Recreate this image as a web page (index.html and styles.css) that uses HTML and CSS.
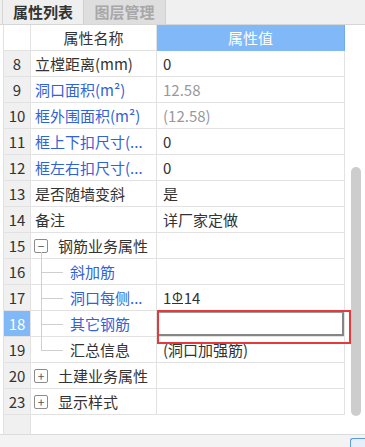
FILE: index.html
```html
<!DOCTYPE html>
<html lang="zh-CN">
<head>
  <meta charset="UTF-8"/>
  <title>属性列表</title>
  <link rel="stylesheet" href="styles.css">
</head>
<body>

  <!-- tabs -->
  <div class="tabs">
    <div class="tab active">属性列表</div>
    <div class="tab">图层管理</div>
  </div>

  <div class="panel">
    <div class="grid">
      <div class="row head">
        <div class="num"></div>
        <div class="name">属性名称</div>
        <div class="value">属性值</div>
      </div>
      <div class="row">
        <div class="num">8</div>
        <div class="name">立樘距离(mm)</div>
        <div class="value">0</div>
      </div>
      <div class="row">
        <div class="num">9</div>
        <div class="name blue">洞口面积(m²)</div>
        <div class="value grey">12.58</div>
      </div>
      <div class="row">
        <div class="num">10</div>
        <div class="name blue">框外围面积(m²)</div>
        <div class="value grey">(12.58)</div>
      </div>
      <div class="row">
        <div class="num">11</div>
        <div class="name blue">框上下扣尺寸(...</div>
        <div class="value">0</div>
      </div>
      <div class="row">
        <div class="num">12</div>
        <div class="name blue">框左右扣尺寸(...</div>
        <div class="value">0</div>
      </div>
      <div class="row">
        <div class="num">13</div>
        <div class="name">是否随墙变斜</div>
        <div class="value">是</div>
      </div>
      <div class="row">
        <div class="num">14</div>
        <div class="name">备注</div>
        <div class="value">详厂家定做</div>
      </div>
      <div class="row">
        <div class="num">15</div>
        <div class="name tree open"><span class="toggle">−</span>钢筋业务属性</div>
        <div class="value"></div>
      </div>
      <div class="row">
        <div class="num">16</div>
        <div class="name child blue">斜加筋</div>
        <div class="value"></div>
      </div>
      <div class="row">
        <div class="num">17</div>
        <div class="name child blue">洞口每侧...</div>
        <div class="value">1<span class="rebar">Φ</span>14</div>
      </div>
      <div class="row">
        <div class="num selected">18</div>
        <div class="name child blue">其它钢筋</div>
        <div class="value editing">
          <div class="editor"></div>
          <div class="mark"></div>
        </div>
      </div>
      <div class="row">
        <div class="num">19</div>
        <div class="name child last">汇总信息</div>
        <div class="value">(洞口加强筋)</div>
      </div>
      <div class="row">
        <div class="num">20</div>
        <div class="name tree"><span class="toggle">+</span>土建业务属性</div>
        <div class="value"></div>
      </div>
      <div class="row">
        <div class="num">23</div>
        <div class="name tree"><span class="toggle">+</span>显示样式</div>
        <div class="value"></div>
      </div>
      <div class="filler"><div class="num"></div></div>
    </div>
    <div class="scroll">
      <div class="thumb"></div>
    </div>
  </div>

  <div class="footer">
    <div class="btn"></div>
  </div>

</body>
</html>
```

FILE: styles.css
```css
* {
  box-sizing: border-box;
}
html, body {
  margin: 0;
  padding: 0;
  width: 365px;
  height: 447px;
  overflow: hidden;
  background: #fff;
  font-family: "Noto Sans CJK SC", "Noto Sans", sans-serif;
  font-size: 15px;
  color: #333;
}

/* tabs */
.tabs {
  display: flex;
  height: 25px;
  padding-left: 2px;
  background: #f0f0f0;
  border-bottom: 1px solid #d6d6d6;
}
.tab {
  width: 82px;
  line-height: 24px;
  text-align: center;
  font-weight: bold;
  color: #a8a8a8;
  background: #dedede;
  border-right: 1px solid #d0d0d0;
}
.tab.active {
  width: 82px;
  color: #333;
  background: #efefef;
  border-left: 1px solid #d6d6d6;
}

/* grid */
.panel {
  display: flex;
  height: 410px;
  padding-left: 3px;
  border-bottom: 1px solid #dcdcdc;
}
.grid {
  display: flex;
  flex-direction: column;
  width: 342px;
}
.row {
  display: grid;
  grid-template-columns: 28px 126px 188px;
  height: 26px;
}
.row > div {
  display: flex;
  align-items: center;
  border-right: 1px solid #e2e2e2;
  border-bottom: 1px solid #e2e2e2;
  white-space: nowrap;
  overflow: hidden;
}
.num {
  justify-content: center;
  background: #f0f0f0;
  border-left: 1px solid #e2e2e2;
}
.num.selected {
  background: #80b8f8;
  color: #fff;
}
.name {
  padding-left: 4px;
}
.value {
  padding-left: 6px;
}
.head .num {
  background: #fff;
}
.head .name {
  justify-content: center;
  padding-left: 0;
}
.head .value {
  justify-content: center;
  padding-left: 0;
  background: #80b8f8;
  color: #fff;
  border-right-color: #6fa9ee;
  border-bottom-color: #80b8f8;
}
.blue {
  color: #3262d8;
}
.grey {
  color: #999;
}

/* tree */
.row > .tree,
.row > .child {
  position: relative;
  overflow: visible;
}
.tree {
  padding-left: 3px;
}
.toggle {
  display: flex;
  align-items: center;
  justify-content: center;
  width: 14px;
  height: 14px;
  margin-right: 10px;
  border: 1px solid #8c8c8c;
  border-radius: 2px;
  font-size: 12px;
  line-height: 1;
  color: #555;
  background: #fff;
}
.tree.open::after {
  content: "";
  position: absolute;
  left: 10px;
  top: 19px;
  bottom: -1px;
  border-left: 1px solid #cfcfcf;
}
.child {
  padding-left: 39px;
}
.child::before {
  content: "";
  position: absolute;
  left: 10px;
  top: 0;
  bottom: -1px;
  border-left: 1px solid #cfcfcf;
}
.child.last::before {
  bottom: 50%;
}
.child::after {
  content: "";
  position: absolute;
  left: 10px;
  width: 22px;
  top: 50%;
  border-top: 1px solid #cfcfcf;
}
.rebar {
  display: inline-block;
  font-size: 13px;
  line-height: 12px;
  margin: 0 1px;
  border-bottom: 1px solid #333;
}

/* row 18 editor */
.row > .editing {
  position: relative;
  overflow: visible;
  padding: 1px 0 0 1px;
}
.editor {
  width: 100%;
  height: 100%;
  border: 1px solid #9a9a9a;
  border-right: 2px solid #858585;
  border-bottom: 2px solid #858585;
}
.mark {
  position: absolute;
  left: 0;
  top: -1px;
  right: -7px;
  bottom: -8px;
  border: 2px solid #e8383b;
}

.filler {
  flex: 1;
  display: flex;
}
.filler .num {
  width: 28px;
  border-right: 1px solid #e2e2e2;
}

/* scrollbar */
.scroll {
  flex: 1;
  padding-left: 6px;
}
.thumb {
  width: 10px;
  height: 249px;
  margin-top: 142px;
  border-radius: 5px;
  background: #cdcdcd;
}

.footer {
  display: flex;
  justify-content: flex-end;
  height: 12px;
  background: #f3f3f3;
}
.btn {
  width: 15px;
  height: 9px;
  margin-top: 3px;
  border: 1px solid #5a9ae0;
  border-right: none;
  border-bottom: none;
  border-radius: 3px 0 0 0;
  background: #e6f0fc;
}
```
